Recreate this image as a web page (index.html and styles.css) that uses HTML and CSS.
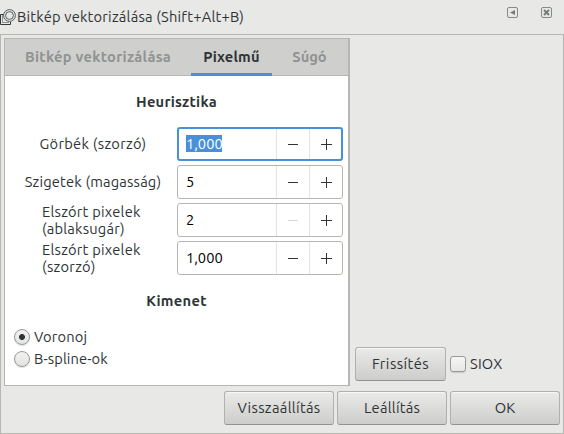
FILE: index.html
```
<!DOCTYPE html>
<html lang="hu">
<head>
<meta charset="utf-8">
<title>Bitkép vektorizálása</title>
<link rel="stylesheet" href="styles.css">
</head>
<body>
<header class="titlebar">
  <svg class="app-icon" width="17" height="17" viewBox="0 0 17 17" fill="none" stroke="#33393b">
    <path d="M3 5.500H.5V15.500H10.500V13"/><path d="M4.500 5.500H2.500V13.500H8.500V11.500" stroke-width=".5"/>
    <circle cx="9.500" cy="6.500" r="5.900" fill="#e8e8e6" stroke-width=".8"/><circle cx="9.500" cy="6.500" r="3.900" stroke-width=".8"/>
  </svg>
  <h1 class="title">Bitkép vektorizálása (Shift+Alt+B)</h1>
  <svg class="win-icon" width="11" height="11" viewBox="0 0 11 11"><rect x=".5" y=".5" width="10" height="10" rx="1.500" fill="none" stroke="#858987"/><path d="M3 5.500L8 3V8Z" fill="#777b79"/></svg>
  <svg class="win-icon close" width="11" height="11" viewBox="0 0 11 11"><rect x=".5" y=".5" width="10" height="10" rx="1.500" fill="none" stroke="#858987"/><path d="M3 3L8 8M8 3L3 8" stroke="#777b79" stroke-width="2"/></svg>
</header>
<main class="dialog">
  <div class="upper">
    <section class="notebook">
      <nav class="tabs">
        <span class="tab tab-main"><span class="t-main">Bitkép vektorizálása</span></span>
        <span class="tab active"><span class="t-pixel">Pixelmű</span></span>
        <span class="tab tab-help"><span class="t-help">Súgó</span></span>
      </nav>
      <h2 class="heading h-heur"><span>Heurisztika</span></h2>
      <div class="rows">
        <div class="row"><span class="label"><span class="l-curve">Görbék (szorzó)</span></span>
          <div class="spin focus"><span class="value"><span class="sel">1,000</span></span><span class="step minus"></span><span class="step plus"></span></div></div>
        <div class="row"><span class="label"><span class="l-island">Szigetek (magasság)</span></span>
          <div class="spin"><span class="value">5</span><span class="step minus"></span><span class="step plus"></span></div></div>
        <div class="row"><span class="label two"><span><span class="l-sparse">Elszórt pixelek</span><br><span class="l-radius">(ablaksugár)</span></span></span>
          <div class="spin"><span class="value">2</span><span class="step minus off"></span><span class="step plus"></span></div></div>
        <div class="row"><span class="label two"><span><span class="l-sparse">Elszórt pixelek</span><br><span class="l-mult">(szorzó)</span></span></span>
          <div class="spin"><span class="value">1,000</span><span class="step minus"></span><span class="step plus"></span></div></div>
      </div>
      <h2 class="heading h-out"><span>Kimenet</span></h2>
      <div class="radios">
        <div class="option"><i class="radio on"></i><span class="text o-vor">Voronoj</span></div>
        <div class="option"><i class="radio"></i><span class="text o-spl">B-spline-ok</span></div>
      </div>
    </section>
    <aside class="side">
      <span class="button refresh"><span class="b-fri">Frissítés</span></span>
      <i class="check"></i><span class="text o-siox">SIOX</span>
    </aside>
  </div>
  <footer class="actions">
    <span class="button"><span class="b-vis">Visszaállítás</span></span>
    <span class="button"><span class="b-lea">Leállítás</span></span>
    <span class="button"><span class="b-ok">OK</span></span>
  </footer>
</main>
</body>
</html>
```
FILE: styles.css
```
* { box-sizing: border-box; }
body { margin: 0; width: 564px; height: 434px; overflow: hidden; background: #e8e8e6; color: #2e3436; font: 14.667px/17px Ubuntu, "Noto Sans", sans-serif; white-space: nowrap; }
.titlebar { height: 34px; display: flex; align-items: flex-start; }
.app-icon { margin-top: 9px; }
.title { margin: 8px 0 0; font-size: 14.667px; font-weight: 400; line-height: 17px; flex: 1; letter-spacing: .22px; }
.win-icon { margin: 7px 0 0; }
.win-icon.close { margin-left: 23px; margin-right: 12px; }
.dialog { height: 400px; border: 1px solid #b6b6b3; padding: 3px; }
.upper { display: flex; height: 348px; }
.notebook { width: 346px; background: #fff; border: 1px solid #b6b6b3; border-right-width: 2px; }
.tabs { height: 37px; display: flex; background: #cfcfcd; border-bottom: 1px solid #b6b6b3; font-weight: 700; color: #8f9392; }
.tab { height: 37px; padding-top: 9px; display: flex; justify-content: center; }
.tab-main { width: 186px; }
.tab.active { width: 81px; color: #2e3436; border-bottom: 3px solid #4a90d9; }
.tab-help { width: 75px; }
.heading { margin: 0; font-size: 14.667px; line-height: 17px; text-align: center; letter-spacing: .25px; }
.h-heur { margin-top: 17px; }
.h-out { margin-top: 17px; letter-spacing: .3px; }
.rows { display: flex; flex-direction: column; gap: 4px; margin: 17px 5px 0 0; }
.row { display: flex; height: 34px; }
.label { width: 172px; padding: 0 0 2px 4px; display: flex; align-items: center; justify-content: center; }
.label.two { justify-content: flex-start; padding: 0 0 1px 37px; }
.spin { width: 166px; height: 34px; display: flex; border: 1px solid #b6b6b3; border-radius: 3px; background: #fff; color: #000; }
.spin.focus { border: 2px solid #4a90d9; }
.value { flex: 1; padding: 7px 0 0 8px; }
.focus .value { padding: 6px 0 0 7px; }
.sel { display: block; background: #4a90d9; color: #fff; height: 17px; width: 36px; line-height: 17px; }
.step { width: 33px; border-left: 1px solid #e3e3e1; background: linear-gradient(#2e3436, #2e3436) 11px 16px / 10px 1px no-repeat; }
.plus { background: linear-gradient(#2e3436, #2e3436) 11px 16px / 11px 1px no-repeat, linear-gradient(#2e3436, #2e3436) 16px 11px / 1px 11px no-repeat; }
.focus .step { background-position: 11px 15px, 16px 10px; }
.focus .plus { width: 32px; }
.off { background-image: linear-gradient(#d5d6d6, #d5d6d6); }
.radios { margin: 17px 0 0 9px; }
.option { display: flex; align-items: center; gap: 4px; height: 22px; }
.text { padding-bottom: 2px; }
.radio { width: 16px; height: 16px; border: 1px solid #979b98; border-radius: 50%; background: linear-gradient(#f2f2f1, #e3e3e1); box-shadow: 0 1px 1px #0002; }
.radio.on { background: radial-gradient(circle, #2e3436 2.600px, transparent 3.300px), linear-gradient(#f2f2f1, #e3e3e1); }
.side { display: flex; align-items: center; align-self: flex-end; height: 34px; margin: 0 0 5px 5px; }
.button { width: 110px; height: 34px; padding-bottom: 2px; display: flex; align-items: center; justify-content: center; border: 1px solid #b0b0ad; border-bottom-color: #929490; border-radius: 3px; background: linear-gradient(#eaeae8, #cdcdcb); box-shadow: inset 0 1px #f7f7f6; }
.refresh { width: 91px; }
.check { width: 16px; height: 16px; margin: 0 4px; border: 1px solid #979b98; border-radius: 3px; background: linear-gradient(#f6f6f5, #e7e7e5); box-shadow: 0 1px 1px #0002; }
.actions { display: flex; justify-content: flex-end; gap: 3px; margin-top: 5px; }
.t-main { letter-spacing: .3px; }
.t-pixel { letter-spacing: .2px; }
.l-curve { letter-spacing: .3px; }
.l-island { letter-spacing: .18px; }
.l-sparse { letter-spacing: .24px; }
.l-radius { letter-spacing: .2px; }
.l-mult { letter-spacing: .3px; }
.o-vor { letter-spacing: .2px; }
.o-spl { letter-spacing: .1px; }
.o-siox { letter-spacing: .2px; }
.b-fri { letter-spacing: .45px; }
.b-vis { letter-spacing: .34px; }
.b-lea { letter-spacing: .25px; }
```
